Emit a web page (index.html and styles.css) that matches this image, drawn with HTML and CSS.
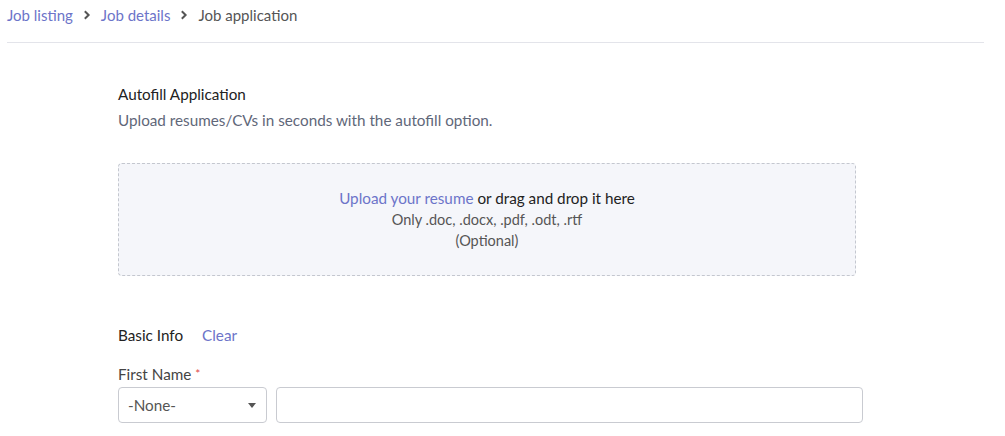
FILE: index.html
```html
<!DOCTYPE html>
<html lang="en">

<head>
  <meta charset="UTF-8">
  <meta name="viewport" content="width=device-width, initial-scale=1.0">
  <title>Job application</title>
  <link rel="stylesheet" href="styles.css">
</head>

<body>
  <nav class="breadcrumb">
    <a href="#" class="crumb-link">Job listing</a>
    <svg class="crumb-sep" width="8" height="10" viewBox="0 0 8 10"><path d="M1.8 1.3 L5.6 5 L1.8 8.7" fill="none" stroke="#555" stroke-width="2"/></svg>
    <a href="#" class="crumb-link">Job details</a>
    <svg class="crumb-sep" width="8" height="10" viewBox="0 0 8 10"><path d="M1.8 1.3 L5.6 5 L1.8 8.7" fill="none" stroke="#555" stroke-width="2"/></svg>
    <span class="crumb-current">Job application</span>
  </nav>

  <main class="application">
    <section class="autofill">
      <h2 class="section-title">Autofill Application</h2>
      <p class="section-note">Upload resumes/CVs in seconds with the autofill option.</p>
      <div class="dropzone">
        <p class="drop-main"><a href="#" class="link">Upload your resume</a> or drag and drop it here</p>
        <p class="drop-sub">Only .doc, .docx, .pdf, .odt, .rtf</p>
        <p class="drop-sub">(Optional)</p>
      </div>
    </section>

    <section class="basic-info">
      <div class="info-head">
        <h2 class="section-title">Basic Info</h2>
        <a href="#" class="link">Clear</a>
      </div>
      <label class="field-label" for="first-name">First Name <span class="req">*</span></label>
      <div class="name-row">
        <div class="salutation">
          <span>-None-</span>
          <svg width="8" height="5" viewBox="0 0 8 5"><path d="M0 0 H8 L4 5 Z" fill="#555"/></svg>
        </div>
        <input id="first-name" type="text" class="text-input">
      </div>
    </section>
  </main>
</body>

</html>
```

FILE: styles.css
```css
* {
  box-sizing: border-box;
}

body {
  margin: 0;
  padding: 0;
  font-family: Lato, "Open Sans", sans-serif;
  font-size: 15.25px;
  color: #222;
  background-color: #fff;
}

a {
  text-decoration: none;
}

.breadcrumb {
  display: flex;
  align-items: center;
  gap: 10px;
  height: 43px;
  margin: 0 21px 0 7px;
  padding-bottom: 12px;
  border-bottom: 1px solid #e3e4ea;
  font-size: 15px;
  line-height: 20px;
}

.crumb-link {
  color: #6c74c9;
}

.crumb-current {
  color: #555;
}

.crumb-sep {
  display: block;
}

.application {
  width: 745px;
  margin-left: 118px;
  padding-top: 41px;
}

.section-title {
  margin: 0;
  font-size: 15.25px;
  font-weight: 400;
  line-height: 20px;
  color: #222;
}

.section-note {
  margin: 6px 0 0;
  line-height: 20px;
  color: #5f6779;
}

.dropzone {
  width: 738px;
  margin-top: 33px;
  padding: 24px 0;
  border: 1px dashed #c4c7cf;
  border-radius: 4px;
  background-color: #f5f6fa;
  text-align: center;
  line-height: 21px;
}

.dropzone p {
  margin: 0;
}

.drop-main {
  color: #222;
}

.drop-sub {
  font-size: 14.5px;
  color: #555;
}

.link {
  color: #6c74c9;
}

.basic-info {
  margin-top: 49px;
}

.info-head {
  display: flex;
  align-items: center;
  gap: 19px;
  line-height: 20px;
}

.field-label {
  display: block;
  margin-top: 19px;
  line-height: 20px;
  color: #444;
}

.req {
  color: #e04848;
  font-size: 12px;
  vertical-align: top;
}

.name-row {
  display: flex;
  gap: 9px;
  margin-top: 3px;
}

.salutation {
  display: flex;
  align-items: center;
  justify-content: space-between;
  width: 149px;
  height: 36px;
  padding: 0 10px 0 9px;
  border: 1px solid #c9cbd1;
  border-radius: 4px;
  color: #555;
}

.text-input {
  flex: 1;
  height: 36px;
  border: 1px solid #c9cbd1;
  border-radius: 4px;
  font: inherit;
}
```
